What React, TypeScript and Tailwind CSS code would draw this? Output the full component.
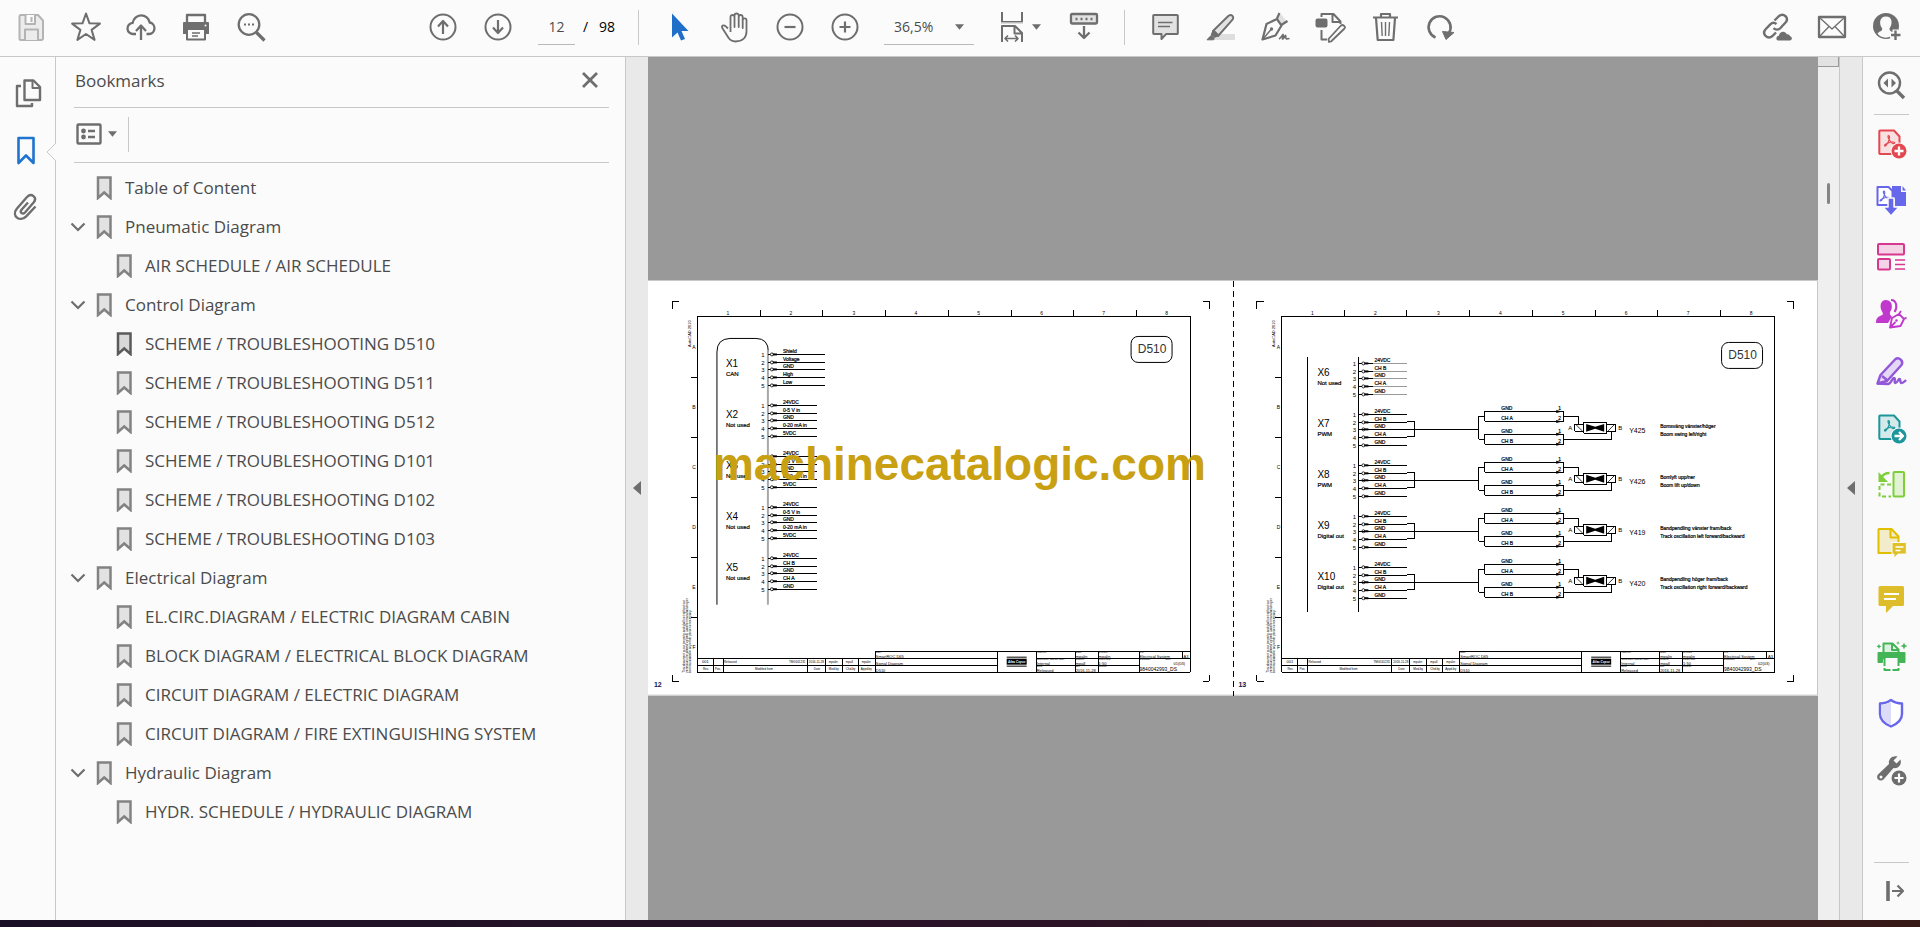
import type { ReactNode } from "react"
import clsx from "clsx"

const bookmarks = [
  { label: "Table of Content", level: 0, open: false },
  { label: "Pneumatic Diagram", level: 0, open: true },
  { label: "AIR SCHEDULE / AIR SCHEDULE", level: 1, open: false },
  { label: "Control Diagram", level: 0, open: true },
  { label: "SCHEME / TROUBLESHOOTING D510", level: 1, open: false, active: true },
  { label: "SCHEME / TROUBLESHOOTING D511", level: 1, open: false },
  { label: "SCHEME / TROUBLESHOOTING D512", level: 1, open: false },
  { label: "SCHEME / TROUBLESHOOTING D101", level: 1, open: false },
  { label: "SCHEME / TROUBLESHOOTING D102", level: 1, open: false },
  { label: "SCHEME / TROUBLESHOOTING D103", level: 1, open: false },
  { label: "Electrical Diagram", level: 0, open: true },
  { label: "EL.CIRC.DIAGRAM / ELECTRIC DIAGRAM CABIN", level: 1, open: false },
  { label: "BLOCK DIAGRAM / ELECTRICAL BLOCK DIAGRAM", level: 1, open: false },
  { label: "CIRCUIT DIAGRAM / ELECTRIC DIAGRAM", level: 1, open: false },
  { label: "CIRCUIT DIAGRAM / FIRE EXTINGUISHING SYSTEM", level: 1, open: false },
  { label: "Hydraulic Diagram", level: 0, open: true },
  { label: "HYDR. SCHEDULE / HYDRAULIC DIAGRAM", level: 1, open: false },
]

function Icon({ children, className = "text-[#6e6e6e]" }: { children: ReactNode; className?: string }) {
  return (
    <svg
      viewBox="0 0 32 32"
      className={clsx("h-8 w-8 shrink-0", className)}
      fill="none"
      stroke="currentColor"
      strokeWidth="2"
      strokeLinejoin="round"
      aria-hidden="true"
    >
      {children}
    </svg>
  )
}

function ToolButton({ label, children }: { label: string; children: ReactNode }) {
  return (
    <button type="button" aria-label={label} className="flex h-[54px] w-[55px] shrink-0 items-center justify-center">
      {children}
    </button>
  )
}

function SideButton({ label, children }: { label: string; children: ReactNode }) {
  return (
    <button type="button" aria-label={label} className="flex h-[57px] w-full shrink-0 items-center justify-center pr-px pb-[2px]">
      {children}
    </button>
  )
}

function Caret() {
  return (
    <svg viewBox="0 0 10 6" className="h-[6px] w-[9px] shrink-0 fill-[#6e6e6e]" aria-hidden="true">
      <path d="M0 0h10L5 6z" />
    </svg>
  )
}

function Separator() {
  return <span className="h-[35px] w-px shrink-0 bg-[#c8c8c8]" />
}

function Toolbar() {
  return (
    <header className="flex h-[57px] shrink-0 items-center border-b border-[#c8c8c8] bg-[#fbfbfb] pr-[6px] pb-[2px] pl-[3px]">
      <ToolButton label="Save">
        <Icon className="text-[#b4b4b4]">
          <path d="M4.500 5.500a1.500 1.500 0 0 1 1.500-1.500h17l5 5.500v18a1.500 1.500 0 0 1-1.500 1.500h-20.500a1.500 1.500 0 0 1-1.500-1.500z" fill="#ececec" />
          <path d="M10.500 4v9h9.500v-9M16.500 6v5" fill="#fbfbfb" />
          <path d="M10 29v-10.500h13v10.500" fill="#ececec" />
        </Icon>
      </ToolButton>
      <ToolButton label="Star">
        <Icon>
          <path d="m16 2.500 3.500 9.800 10.400.3-8.300 6.300 3 10-8.600-5.900-8.600 5.900 3-10-8.300-6.300 10.400-.3z" />
        </Icon>
      </ToolButton>
      <ToolButton label="Upload">
        <Icon>
          <path d="M11 23H8.500a5.600 5.600 0 0 1-.8-11.200 8.600 8.600 0 0 1 17-.3A5.800 5.800 0 0 1 24 23h-2.500" strokeWidth="2.300" />
          <path d="M16 29V15m-5 5 5-5.500 5 5.500" strokeWidth="2.300" />
        </Icon>
      </ToolButton>
      <ToolButton label="Print">
        <Icon>
          <path d="M7 11V4h18v7" strokeWidth="2.300" />
          <path d="M4 11h24a1 1 0 0 1 1 1v11H3V12a1 1 0 0 1 1-1z" fill="currentColor" stroke="none" />
          <path d="M7 18h18v10.500H7z" fill="#fbfbfb" />
          <path d="M12 22h8M12 25h6" strokeWidth="1.500" />
          <circle cx="25.500" cy="14.500" r="1" fill="#fbfbfb" stroke="none" />
        </Icon>
      </ToolButton>
      <ToolButton label="Find">
        <Icon>
          <circle cx="14" cy="13.500" r="10.300" strokeWidth="2.300" />
          <path d="m21.500 21.500 8 8" strokeWidth="3.200" />
          <path d="M9 13.500h2m2 0h2m2 0h2" />
        </Icon>
      </ToolButton>

      <div className="ml-[137px] flex items-center">
        <ToolButton label="Previous page">
          <Icon>
            <circle cx="16" cy="16" r="12.500" />
            <path d="M16 23V10m-5 5.500 5-5.500 5 5.500" strokeWidth="2.200" />
          </Icon>
        </ToolButton>
        <ToolButton label="Next page">
          <Icon>
            <circle cx="16" cy="16" r="12.500" />
            <path d="M16 9v13m-5-5.500 5 5.500 5-5.500" strokeWidth="2.200" />
          </Icon>
        </ToolButton>
        <input
          aria-label="Page number"
          defaultValue="12"
          className="ml-[13px] h-[35px] w-[37px] border-b border-[#b9b9b9] bg-transparent text-center text-sm text-[#4b4b4b] outline-none"
        />
        <span className="ml-2 w-[55px] text-sm text-black">/&nbsp;&nbsp; 98</span>
      </div>
      <Separator />

      <div className="ml-[13px] flex items-center">
        <ToolButton label="Select">
          <Icon className="text-[#1f6fc9]">
            <path d="M8 2.500v24l5.500-5 3.500 8 4-1.500-3.500-8h7z" fill="currentColor" stroke="none" />
          </Icon>
        </ToolButton>
        <ToolButton label="Hand">
          <Icon>
            <path
              d="M9 17.500 6.500 15.200c-2-1.700-4.600-.5-3.200 1.800l6.200 9.800c1.500 2.300 3.500 3.700 7 3.700 6.500 0 11-3.500 11-10V9.300c0-2.600-3.800-2.600-3.800 0V17 6c0-2.700-4-2.700-4 0v10V4.500c0-2.700-4.200-2.700-4.200 0V16 6c0-2.700-4-2.700-4 0v15"
              strokeWidth="1.800"
            />
          </Icon>
        </ToolButton>
        <ToolButton label="Zoom out">
          <Icon>
            <circle cx="16" cy="16" r="12.500" />
            <path d="M10.500 16h11" strokeWidth="2.200" />
          </Icon>
        </ToolButton>
        <ToolButton label="Zoom in">
          <Icon>
            <circle cx="16" cy="16" r="12.500" />
            <path d="M10.500 16h11M16 10.500v11" strokeWidth="2.200" />
          </Icon>
        </ToolButton>
      </div>
      <div className="relative ml-3 flex items-center">
        <select
          aria-label="Zoom level"
          className="h-[35px] w-[90px] appearance-none border-b border-[#b9b9b9] bg-transparent pl-[10px] text-sm text-[#4b4b4b] outline-none"
        >
          <option>36,5%</option>
        </select>
        <span className="pointer-events-none absolute right-[10px]">
          <Caret />
        </span>
      </div>
      <button type="button" aria-label="Fit width" className="ml-[22px] flex h-[54px] w-[60px] shrink-0 items-center gap-1">
        <Icon>
          <path d="M6 1v10h20V1M6 31V15h13l7 7v9M18.500 15v7.500H26" />
          <path d="M5 12h22" stroke="#d5d5d5" strokeWidth="1.500" />
          <path d="M9.500 27.500h12m-9.500-3-3 3 3 3m7-6 3 3-3 3" strokeWidth="1.600" />
        </Icon>
        <Caret />
      </button>
      <ToolButton label="Page display">
        <Icon>
          <rect x="3" y="3" width="26" height="9.500" rx="1" strokeWidth="2.300" fill="#e2e2e2" />
          <path d="M7.500 8h2m3 0h2m3 0h2m3 0h2M16 15v12m-5.500-5.500L16 27l5.500-5.500" strokeWidth="2.300" />
        </Icon>
      </ToolButton>
      <span className="ml-[13px] h-[35px] w-px shrink-0 bg-[#c8c8c8]" />

      <div className="ml-3 flex items-center">
        <ToolButton label="Comment">
          <Icon>
            <path d="M5 4h23a.8.8 0 0 1 .8.800v17.500a.8.8 0 0 1-.8.800H17L12.500 28v-5H5a.8.8 0 0 1-.8-.8V4.800A.8.800 0 0 1 5 4z" fill="#e2e2e2" />
            <path d="M9 11.500h14.500M9 15.500h12" strokeWidth="1.500" />
          </Icon>
        </ToolButton>
        <ToolButton label="Highlight">
          <Icon>
            <path d="M10 29l7-6h14v6z" fill="#dedede" stroke="none" />
            <path d="M9.500 19.500 24 5.200c1.500-1.400 3-1.600 4.300-.4s1.200 2.800-.2 4.300L14.500 24.500z" fill="#e2e2e2" strokeWidth="1.900" />
            <path d="m9 19-1.800 5 3 2.500L15 25zM7 24.500 3 28.800h6.500l1-1z" fill="currentColor" strokeWidth="1" />
          </Icon>
        </ToolButton>
        <ToolButton label="Sign">
          <Icon>
            <path d="M19 7l5 7 4-3-6-8z" fill="#e0e0e0" stroke="none" />
            <path d="M18 7.500 20.500 2M23 13.500 28.500 10M18 8 7.500 13 3.500 28.500 16.500 24.500 22.500 14.500z" strokeWidth="2.200" />
            <path d="m4 28 8-9.500" strokeWidth="1.400" />
            <circle cx="12.500" cy="18" r="1.700" fill="currentColor" stroke="none" />
            <path d="M20 28c2-1 3-3.500 4-4.500.8 1.500-.8 3-.5 4.500 1.500-.5 2-3 3-3.500.5 1.500 0 3 1 3.500l3-.5" strokeWidth="1.700" />
          </Icon>
        </ToolButton>
        <ToolButton label="Edit PDF">
          <Icon>
            <rect x="2.500" y="8.500" width="10" height="7" rx="1" fill="currentColor" />
            <path d="M7.500 6V3h12l7 7.500V13M18.500 3.500V11H26M7.500 19v9.500H13" />
            <path d="M17 30.500l-2 .500-.5-3L27 14.500c1.800-1.500 5 1 3.500 3z" strokeWidth="1.800" />
          </Icon>
        </ToolButton>
        <ToolButton label="Delete">
          <Icon>
            <path d="M4 6.500h25M12 6V3h9v3M7 7l1.700 22h15.700L26 7" strokeWidth="2.200" />
            <path d="M12.500 11l.7 14M16.500 11v14M20.500 11l-.7 14" strokeWidth="1.400" />
          </Icon>
        </ToolButton>
        <ToolButton label="Rotate">
          <Icon>
            <path d="M11.500 26.500A11 11 0 1 1 25 22" strokeWidth="2.600" />
            <path d="M18.500 20.500 30 21.500 22 28.500z" fill="currentColor" strokeWidth="1" />
          </Icon>
        </ToolButton>
      </div>

      <div className="ml-auto flex items-center">
        <ToolButton label="Share link">
          <Icon>
            <path d="M13.500 9.500 18 5c4.500-3.500 10 1.500 7 6l-5.500 6c-2 2-5 2-7 .2" strokeWidth="2.400" />
            <path d="M15.500 13c-1.800-1.500-4.300-1.500-6.200.3L4.800 18c-4.500 5 1.700 11 6.700 7l3.500-3.500" strokeWidth="2.400" />
            <path d="M17 29.500c-2.500-.5-2-4.500.8-4.700 1-5 6.700-5 8-1.500 1.700-.3 3 .7 3.200 2 2.500.5 2.500 4-.2 4.200z" fill="currentColor" stroke="none" />
          </Icon>
        </ToolButton>
        <ToolButton label="Email">
          <Icon>
            <rect x="3" y="6" width="26" height="20" strokeWidth="2.300" />
            <path d="m4 7 12 11L28 7M4 25l9-9.500M28 25l-9-9.500" strokeWidth="1.300" />
          </Icon>
        </ToolButton>
        <ToolButton label="Profile">
          <Icon>
            <circle cx="15" cy="15" r="13" fill="currentColor" stroke="none" />
            <path d="M15 5.500c7 0 6.500 8 3.500 12-.5 2.500 3 3 4.500 5-3 5.500-13.500 5.500-16.500 0 2-2.500 5-2 4.700-5-3.200-4-3.200-12 3.800-12z" fill="#fbfbfb" stroke="none" />
            <path d="M24.500 18.500v11M19 24h11" stroke="#fbfbfb" strokeWidth="6" />
            <path d="M24.500 19.500v9.500M20 24h9.500" strokeWidth="2.400" />
          </Icon>
        </ToolButton>
      </div>
    </header>
  )
}

function BookmarkGlyph({ active }: { active?: boolean }) {
  return (
    <svg viewBox="0 0 16 24" className="h-6 w-4 shrink-0" aria-hidden="true">
      <path
        d="M2 1.500h12.500v20.500L8.200 16.500 2 22z"
        fill={active ? "#d8d8d8" : "#e2e2e2"}
        stroke={active ? "#5a5a5a" : "#828282"}
        strokeWidth="2.500"
      />
    </svg>
  )
}

function NavRail() {
  return (
    <nav className="relative flex w-14 shrink-0 flex-col border-r border-[#c8c8c8] bg-[#fbfbfb] pt-2">
      <button type="button" aria-label="Page thumbnails" className="flex h-14 items-center pl-3">
        <Icon>
          <path d="M12.500 3.500h9L28 10v13H12.500z" strokeWidth="2.400" />
          <path d="M20.500 4v7H28" />
          <path d="M9 9H5v20h15v-3" strokeWidth="2.400" />
        </Icon>
      </button>
      <button type="button" aria-label="Bookmarks" className="flex h-[60px] items-center pl-[10px]">
        <Icon className="text-[#1f74cf]">
          <path d="M8.500 3h15v25L16 20.500 8.500 28z" strokeWidth="2.600" />
        </Icon>
      </button>
      <button type="button" aria-label="Attachments" className="flex h-[52px] items-center pl-[10px]">
        <Icon>
          <path
            d="m25.500 15.500-9.300 9.800c-6.500 6.500-15-.5-9.400-7.500L17 6c4.500-4.500 10.500.5 6.800 5.300L15 21.500c-2.500 2.500-5.500 0-3.500-2.700l6.500-7.300"
            strokeWidth="2.400"
          />
        </Icon>
      </button>
      {/* notch pointing at the active tab */}
      <svg viewBox="0 0 10 18" className="absolute top-[86px] -right-px h-[18px] w-[10px]" aria-hidden="true">
        <path d="M10 0 1 9l9 9" fill="#fbfbfb" stroke="#c8c8c8" />
      </svg>
    </nav>
  )
}

function BookmarksPanel() {
  return (
    <aside className="flex w-[570px] shrink-0 flex-col border-r border-[#c8c8c8] bg-[#fbfbfb] pr-4 pl-[18px]">
      <div className="flex h-[51px] items-center justify-between border-b border-[#c8c8c8] pb-[2px]">
        <h2 className="ml-px text-[17px] text-[#4b4b4b]">Bookmarks</h2>
        <button type="button" aria-label="Close" className="mr-[10px]">
          <svg viewBox="0 0 18 18" className="h-[18px] w-[18px]" stroke="#6e6e6e" strokeWidth="2.800" aria-hidden="true">
            <path d="m2 1 14 14M16 1 2 15" />
          </svg>
        </button>
      </div>
      <div className="flex h-[55px] items-center border-b border-[#c8c8c8] pb-[2px]">
        <button type="button" aria-label="Options" className="ml-[2px] flex items-center gap-[6px]">
          <svg viewBox="0 0 26 22" className="h-[22px] w-[26px]" fill="none" stroke="#6e6e6e" strokeWidth="2.400" aria-hidden="true">
            <rect x="1.500" y="1.500" width="23" height="19" rx="1" />
            <path d="M12 8h7M12 14h7" />
            <circle cx="7.500" cy="8" r="1.200" />
            <circle cx="7.500" cy="14" r="1.200" />
          </svg>
          <Caret />
        </button>
        <span className="ml-[11px] h-[35px] w-px bg-[#c8c8c8]" />
      </div>
      <ul className="mt-[5px] text-[17px] text-[#4b4b4b]">
        {bookmarks.map((item) => (
          <li key={item.label} className={clsx("flex h-[39px] items-center", item.level === 1 && "pl-5")}>
            <span className="flex w-[22px] shrink-0 items-center">
              {item.open && (
                <button type="button" aria-label={`Collapse ${item.label}`} className="-ml-1">
                  <svg viewBox="0 0 16 10" className="h-[10px] w-4" fill="none" stroke="#6e6e6e" strokeWidth="2.200" aria-hidden="true">
                    <path d="m1.500 1.500 6.500 6.500 6.500-6.500" />
                  </svg>
                </button>
              )}
            </span>
            <BookmarkGlyph active={item.active} />
            <a href="#" className="ml-[13px] whitespace-nowrap">
              {item.label}
            </a>
          </li>
        ))}
      </ul>
    </aside>
  )
}

const columns = [80, 143, 206, 268, 331, 394, 456, 519]
const rows = ["A", "B", "C", "D", "E", "F"]

const inputs = ["24VDC", "0-5 V in", "GND", "0-20 mA in", "5VDC"]
const outputs = ["24VDC", "CH B", "GND", "CH A", "GND"]

const leftBlocks = [
  { name: "X1", note: "CAN", y: 74, pins: ["Shield", "Voltage", "GND", "High", "Low"], end: 177 },
  { name: "X2", note: "Not used", y: 125, pins: inputs, end: 169 },
  { name: "X3", note: "Not used", y: 176, pins: inputs, end: 169 },
  { name: "X4", note: "Not used", y: 227, pins: inputs, end: 169 },
  { name: "X5", note: "Not used", y: 278, pins: outputs, end: 169 },
]

const rightBlocks = [
  { name: "X6", note: "Not used", y: 83 },
  { name: "X7", note: "PWM", y: 134, valve: "Y425", sv: "Bomsväng vänster/höger", en: "Boom swing left/right" },
  { name: "X8", note: "PWM", y: 185, valve: "Y426", sv: "Bomlyft upp/ner", en: "Boom lift up/down" },
  { name: "X9", note: "Digital out", y: 236, valve: "Y419", sv: "Bandpendling vänster fram/back", en: "Track oscillation left forward/backward" },
  { name: "X10", note: "Digital out", y: 287, valve: "Y420", sv: "Bandpendling höger fram/back", en: "Track oscillation right forward/backward" },
]

// Drawing frame, rulers and title block shared by every sheet
function SheetFrame({ page, sheet }: { page: string; sheet: string }) {
  return (
    <g>
      <g fill="none" stroke="#000" shapeRendering="crispEdges">
        <path d="M24.500 29v-7.500h7M555 21.500h6.500V29M24.500 395v6.500h7M555 401.500h6.500V395" />
        <path d="M49.500 36.500h493v356h-493z" />
        <path d="M112.500 30v6M174.500 30v6M237.500 30v6M300.500 30v6M363.500 30v6M425.500 30v6M488.500 30v6" />
        <path d="M43 97.500h6M43 157.500h6M43 217.500h6M43 277.500h6M43 337.500h6" />
        <path d="M49 378.500h300M49 385.500h300M227.500 392v-20.500h315M65.500 378v14M75.500 378v14M159.500 378v14M177.500 378v14M194.500 378v14M210.500 378v14" />
        <path d="M349.500 371v21M388.500 371v21M427.500 371v21M450.500 371v21M491.500 371v21M534.500 371v7M388 378.500h155M388 385.500h103" />
      </g>
      <g fontSize="5">
        {columns.map((x, i) => (
          <text key={x} x={x} y="35" textAnchor="middle">
            {i + 1}
          </text>
        ))}
        {rows.map((r, i) => (
          <text key={r} x="46" y={69 + i * 60} textAnchor="middle">
            {r}
          </text>
        ))}
      </g>
      <text transform="translate(43 67) rotate(-90)" fontSize="4">
        AutoCAD 2010
      </text>
      <g fontSize="3">
        <text transform="translate(37 393) rotate(-90)">This document is our property and shall not without our</text>
        <text transform="translate(40 393) rotate(-90)">permission be altered, copied, used for manufacturing or</text>
        <text transform="translate(43 393) rotate(-90)">communicated to any other person or company.</text>
      </g>
      <g fontSize="3">
        <text x="54" y="383" fontSize="4">
          001
        </text>
        <text x="76" y="383">Released</text>
        <text x="141" y="383">TMG161231</text>
        <text x="161" y="383">2016-11-28</text>
        <text x="181" y="383">mpalin</text>
        <text x="198" y="383">mpall</text>
        <text x="214" y="383">mpalin</text>
        <text x="55" y="390">Rev.</text>
        <text x="67" y="390">Pos.</text>
        <text x="107" y="390">Modified from</text>
        <text x="166" y="390">Date</text>
        <text x="181" y="390">Mod.by</text>
        <text x="198" y="390">Chd.by</text>
        <text x="213" y="390">Appd.by</text>
      </g>
      <g fontSize="2">
        <text x="228" y="373">Name</text>
        <text x="389" y="373">Handled by</text>
        <text x="389" y="380">Confidentiality class acc/ 15504</text>
        <text x="389" y="387">Status</text>
        <text x="428" y="373">Drawn</text>
        <text x="428" y="380">Design by</text>
        <text x="428" y="387">Date</text>
        <text x="451" y="373">Reviewed</text>
        <text x="451" y="380">Product name</text>
        <text x="451" y="387">Company</text>
        <text x="492" y="373">Type</text>
        <text x="492" y="380">Designation</text>
        <text x="518" y="380">Sheet</text>
      </g>
      <g fontSize="4">
        <text x="228" y="378">SmartROC D65</text>
        <text x="228" y="385">Signal Diagram</text>
        <text x="228" y="392">D510</text>
        <text x="389" y="385">Internal</text>
        <text x="389" y="392">Released</text>
        <text x="428" y="378">mpalin</text>
        <text x="428" y="385">mpall</text>
        <text x="428" y="392">2016-11-28</text>
        <text x="451" y="378">mpalin</text>
        <text x="451" y="385">1:50</text>
        <text x="492" y="378">Electrical System</text>
        <text x="536" y="378">A3</text>
        <text x="526" y="385">{sheet}</text>
        <text x="492" y="391" fontSize="5">
          9840042993_DS
        </text>
      </g>
      <path d="M359 377.500h20M359 386.500h20" stroke="#000" />
      <rect x="359" y="379" width="20" height="6" />
      <text x="369" y="383" fontSize="3" fill="#fff" fontWeight="700" fontStyle="italic" textAnchor="middle">
        Atlas Copco
      </text>
      <text x="6" y="407" fontSize="7" fontWeight="700" fill="#0b1550">
        {page}
      </text>
    </g>
  )
}

function SheetTag({ x, y }: { x: number; y: number }) {
  return (
    <g>
      <rect x={x} y={y} width="41" height="26" rx="7" fill="none" stroke="#000" />
      <text x={x + 21} y={y + 17} fontSize="12" textAnchor="middle" fill="#333">
        D510
      </text>
    </g>
  )
}

type BlockProps = { x: number; y: number; name: string; note: string; pins: string[]; end: number; faint?: boolean }

// Connector block; x is the right-hand edge of the connector housing
function Block({ x, y, name, note, pins, end, faint }: BlockProps) {
  return (
    <g>
      <text x={x - 42} y={y + 13} fontSize="10">
        {name}
      </text>
      <text x={x - 42} y={y + 22} fontSize="6" stroke="#000" strokeWidth="0.200">
        {note}
      </text>
      {pins.map((pin, i) => {
        const py = y + Math.round(i * 7.7)
        return (
          <g key={i}>
            <text x={x - 5} y={py + 3} fontSize="6" textAnchor="middle">
              {i + 1}
            </text>
            <path d={`M${x} ${py + 0.5}h14`} stroke="#000" shapeRendering="crispEdges" />
            <path d={`M${x + 14} ${py + 0.5}H${end}`} stroke={faint ? "#999" : "#000"} shapeRendering="crispEdges" />
            <circle cx={x + 4} cy={py + 0.5} r="1.500" fill="#fff" stroke="#000" strokeWidth="0.800" />
            <path d={`M${x + 5} ${py + 0.5}h4`} stroke="#000" strokeWidth="2" />
            <text x={x + 15} y={py - 1} fontSize="5" stroke="#000" strokeWidth="0.200">
              {pin}
            </text>
          </g>
        )
      })}
    </g>
  )
}

// Cable pair and solenoid valve wired to a connector block
function Valve({ y, name, sv, en }: { y: number; name: string; sv: string; en: string }) {
  return (
    <g transform={`translate(0 ${y})`}>
      <g fill="none" stroke="#000" shapeRendering="crispEdges">
        <path d="M175 7.500h7.500v15.500H175M127 15.500h119M252 2.500h-5.500v23h5.500" />
        <path d="M252.500-2.500h79v10h-79zM252.500 20.500h79v10h-79z" />
        <path d="M332 2.500h14.500v8M332 25.500h47.500v-8" />
        <path d="M342.500 10.500h9v7h-9zM374.500 10.500h9v7h-9zM351.500 8.500h23v11h-23z" />
      </g>
      <path d="M344 11l6 6M376 17l6-6" stroke="#000" strokeWidth="0.800" />
      <path d="M354 10l9 3 9-3v8l-9-3-9 3z" />
      <path d="M324-4l6 1.500-6 1.500zM324 6l6 1.500-6 1.500zM324 19l6 1.500-6 1.500zM324 29l6 1.500-6 1.500z" />
      <g fontSize="5" stroke="#000" strokeWidth="0.200">
        <text x="269" y="-4">GND</text>
        <text x="269" y="6">CH A</text>
        <text x="269" y="19">GND</text>
        <text x="269" y="29">CH B</text>
        <text x="326" y="-4">1</text>
        <text x="326" y="6">2</text>
        <text x="326" y="19">1</text>
        <text x="326" y="29">2</text>
        <text x="428" y="14">{sv}</text>
        <text x="428" y="22">{en}</text>
      </g>
      <g fontSize="6">
        <text x="336" y="16">A</text>
        <text x="386" y="16">B</text>
        <text x="397" y="19" fontSize="7">
          {name}
        </text>
      </g>
    </g>
  )
}

function DocumentSpread() {
  return (
    <svg
      viewBox="0 0 1171 416"
      className="w-full font-['Liberation_Sans',Arial,sans-serif]"
      role="img"
      aria-label="Signal diagram D510, pages 12 and 13"
    >
      <rect width="1171" height="416" fill="#fff" />
      <path d="M0 .500h1170.500v415H0" fill="none" stroke="#c8c8c8" />

      <SheetFrame page="12" sheet="01(03)" />
      <SheetTag x={483.5} y={56.5} />
      <path d="M69 325V72q0-13 13-13.500h26q12.500 0 12.500 13.500" fill="none" stroke="#000" />
      <path d="M120 70v255" stroke="#a8a8a8" strokeWidth="2" />
      {leftBlocks.map((b) => (
        <Block key={b.name} x={120} {...b} />
      ))}

      <g transform="translate(585 0)">
        <SheetFrame page="13" sheet="02(03)" />
        <SheetTag x={489.5} y={62.5} />
        <path d="M75.500 77v255M126.500 77v255" stroke="#000" shapeRendering="crispEdges" />
        {rightBlocks.map((b) => (
          <g key={b.name}>
            <Block x={127} y={b.y} name={b.name} note={b.note} pins={outputs} end={175} faint={!b.valve} />
            {b.valve && <Valve y={b.y} name={b.valve} sv={b.sv} en={b.en} />}
          </g>
        ))}
      </g>

      <path d="M585.500 1v415" stroke="#000" strokeDasharray="6 4" shapeRendering="crispEdges" />
      <text x="65" y="200" fontSize="46" fontWeight="700" fill="#c8a012">
        machinecatalogic.com
      </text>
    </svg>
  )
}

function CollapseHandle({ label }: { label: string }) {
  return (
    <button type="button" aria-label={label} className="flex w-[22px] shrink-0 items-center justify-center bg-[#e9e9e9] pb-px">
      <svg viewBox="0 0 8 14" className="h-[14px] w-2 fill-[#6e6e6e]" aria-hidden="true">
        <path d="M8 0v14L0 7z" />
      </svg>
    </button>
  )
}

// Trefoil used on the PDF tool icons
function PdfMark() {
  return <path d="M13.500 8.500c-1.500.5.500 4 2 6 1.500 2 4 3 4.500 1.500-1-1.500-5.500-.5-8 .5-2.500 1-3 2.500-2 2.500 1.500 0 4.500-6 4.500-8.500 0-1.200-.5-2-1-2z" strokeWidth="1.200" />
}

function ToolsRail() {
  return (
    <nav className="flex w-[58px] shrink-0 flex-col items-center border-l border-[#c8c8c8] bg-[#fafafa]">
      <SideButton label="Search tools">
        <Icon>
          <circle cx="14.500" cy="14" r="10.500" strokeWidth="2.400" />
          <path d="m22 22 7 7" strokeWidth="3.400" />
          <path d="M13 9.500v9L8.500 14zM16.500 9.500v9L21 14z" fill="currentColor" stroke="none" />
        </Icon>
      </SideButton>
      <span className="h-px w-[35px] shrink-0 bg-[#c8c8c8]" />
      <SideButton label="Create PDF">
        <Icon className="text-[#e34850]">
          <path d="M5 3.500h14l5.500 6V27H5a.7.700 0 0 1-.7-.7V4.200A.7.700 0 0 1 5 3.500z" fill="#f8dfe0" />
          <PdfMark />
          <circle cx="24" cy="24" r="8.500" fill="#fafafa" stroke="none" />
          <circle cx="24" cy="24" r="7.500" fill="currentColor" stroke="none" />
          <path d="M24 19.500v9M19.500 24h9" stroke="#fff" strokeWidth="2.300" />
        </Icon>
      </SideButton>
      <SideButton label="Combine files">
        <Icon className="text-[#6767ec]">
          <path d="M2.500 3h11l4 4v14h-15z" fill="#fff" />
          <g transform="translate(-4 -1) scale(0.950)">
            <PdfMark />
          </g>
          <path d="M17 2h9v6h5v14H20v-7h-3z" fill="currentColor" stroke="none" />
          <path d="M27.500 2 31 6.500h-3.500z" fill="currentColor" stroke="none" />
          <path d="M13 14h6v9h5l-8 9-8-9h5z" fill="currentColor" stroke="#fafafa" strokeWidth="1.500" />
        </Icon>
      </SideButton>
      <SideButton label="Organize pages">
        <Icon className="text-[#d83790]">
          <rect x="3" y="3" width="26" height="10.500" rx="1" fill="#f5d3e6" />
          <rect x="3" y="18" width="12" height="10.500" rx="1" fill="#f5d3e6" />
          <path d="M20 19h10M20 23.500h10M20 28h10" strokeWidth="1.400" />
        </Icon>
      </SideButton>
      <SideButton label="Request signatures">
        <Icon className="text-[#c038cc]">
          <path d="M11 2c7 0 7 9 4 12-.5 3 1 3.500 2 4.500L13 25H1c0-5 2-6.500 6.500-8 .5-1 .5-2-.5-3.500C4.500 9 5 2 11 2z" fill="currentColor" stroke="none" />
          <path d="M16 2c6 0 6.500 8 3.500 12" />
          <path d="M15 29.500 17 20l7-4 5 5-3.500 7zM24 16l2-3M29 21l2.500-1.500M15 29.500l5.500-5.500" strokeWidth="1.800" fill="#fafafa" />
          <circle cx="21.500" cy="22.500" r="1.300" fill="currentColor" stroke="none" />
        </Icon>
      </SideButton>
      <SideButton label="Fill and sign">
        <Icon className="text-[#9256d9]">
          <path d="M2.500 28.500 5.500 20 20.500 4c3.500-2.500 8.500 2 6 6L12 26z" fill="#e5d8f6" strokeWidth="2.400" />
          <path d="M7 21l5 4M2 28.500l11 .5c3 0 4-6 6-6s-.5 5 1.500 5 2.500-4 4-4 0 4 2 4 2.500-1 4.500-3" strokeWidth="2.400" />
        </Icon>
      </SideButton>
      <SideButton label="Export PDF">
        <Icon className="text-[#1d959b]">
          <path d="M5 3.500h14l5.500 6V27H5a.7.700 0 0 1-.7-.7V4.200A.7.700 0 0 1 5 3.500z" fill="#d3e9ea" />
          <PdfMark />
          <circle cx="24" cy="24" r="8.500" fill="#fafafa" stroke="none" />
          <circle cx="24" cy="24" r="7.500" fill="currentColor" stroke="none" />
          <path d="M19.500 24h8m-3.500-4 4 4-4 4" stroke="#fff" strokeWidth="2.300" />
        </Icon>
      </SideButton>
      <SideButton label="Rotate pages">
        <Icon className="text-[#7fcf3c]">
          <rect x="18.500" y="3" width="10.500" height="24.500" rx="1" fill="#e2f3d4" />
          <path d="M16 15.500H4.500v12H16" strokeDasharray="4 2.500" />
          <path d="M14.500 4C10 4 7.500 6 6 9" strokeWidth="2.500" />
          <path d="M3.500 3v10H13z" fill="currentColor" stroke="none" />
        </Icon>
      </SideButton>
      <SideButton label="Send for comments">
        <Icon className="text-[#dfbf00]">
          <path d="M4 3h12.500l7 7.500V27H3.500V3.500z" fill="#f3ecca" />
          <path d="M15.500 3.500v8h8" />
          <path d="M17 16.500h13.500a.8.800 0 0 1 .8.800v10a.8.800 0 0 1-.8.800H23l-4 4v-4h-2z" fill="#e0c028" stroke="#fafafa" strokeWidth="1" />
          <path d="M20.500 21h8M20.500 24.500h5" stroke="#fff" strokeWidth="1.500" />
        </Icon>
      </SideButton>
      <SideButton label="Comment">
        <Icon className="text-[#debd2b]">
          <path d="M5 3h22.500A1.500 1.500 0 0 1 29 4.500v17a1.500 1.500 0 0 1-1.500 1.500H18l-7 7v-7H5a1.500 1.500 0 0 1-1.500-1.500v-17A1.500 1.500 0 0 1 5 3z" fill="currentColor" stroke="none" />
          <path d="M9 11h15M9 16h12" stroke="#fff" />
        </Icon>
      </SideButton>
      <SideButton label="Scan and print">
        <Icon className="text-[#44b556]">
          <path d="M8.500 13V3.500h9l6 6V13M17 3.500V10h6.500" fill="#dcf0df" />
          <path d="M3.500 13v9H7v-4h18v4h4.500v-9z" fill="currentColor" />
          <path d="M9.500 18v12h14V18" strokeDasharray="8 2" fill="#fafafa" />
          <path d="M29 2.500l1 2.500 2.500 1-2.500 1-1 2.500L28 7l-2.500-1L28 5zM4 4l.7 1.500L6.500 6.500l-1.800.7L4 9l-.8-1.800L1.500 6.500l1.700-1zM23 1l.5 1.500L25 3l-1.500.500L23 5l-.5-1.500L21 3l1.500-.5z" fill="currentColor" stroke="none" />
        </Icon>
      </SideButton>
      <SideButton label="Protect">
        <Icon className="text-[#6767ec]">
          <path d="M16 3c3.500 2.500 7 3.500 11 3.500V17c0 5.500-5 10-11 12.500C10 27 5 22.500 5 17V6.500C9 6.500 12.500 5.500 16 3z" fill="#fff" strokeWidth="2.400" />
          <path d="M16 4.500V28c-5-2-9.500-6-9.500-11V7.800C10 7.500 13 6.500 16 4.500z" fill="#dcdcf8" stroke="none" />
        </Icon>
      </SideButton>
      <SideButton label="More tools">
        <Icon>
          <path d="M25.500 5.500l-4 4-3-3 4-4c-5-1.500-9.500 2.500-8.500 7.500L3 20.500c-3 4 2 8 5.500 5L18.500 14c5 1 8.500-3.500 7-8.500z" fill="currentColor" stroke="none" />
          <circle cx="6" cy="23" r="1.500" fill="#fafafa" stroke="none" />
          <circle cx="24" cy="24" r="8.500" fill="#fafafa" stroke="none" />
          <circle cx="24" cy="24" r="7.500" fill="currentColor" stroke="none" />
          <path d="M24 19.500v9M19.500 24h9" stroke="#fff" strokeWidth="2.200" />
        </Icon>
      </SideButton>
      <span className="mt-auto h-px w-[35px] shrink-0 bg-[#c8c8c8]" />
      <SideButton label="Collapse tools">
        <Icon>
          <path d="M13 6v20" strokeWidth="3.600" />
          <path d="M17 16h11m-5.500-5.500L28 16l-5.500 5.500" strokeWidth="2.200" />
        </Icon>
      </SideButton>
    </nav>
  )
}

export default function App() {
  return (
    <div className="flex h-screen flex-col overflow-hidden bg-[#fbfbfb] font-['Open_Sans','Noto_Sans',sans-serif]">
      <Toolbar />
      <div className="flex min-h-0 flex-1">
        <NavRail />
        <BookmarksPanel />
        <CollapseHandle label="Hide bookmarks" />
        <main className="flex min-w-0 flex-1 items-center bg-[#999] pb-px">
          <DocumentSpread />
        </main>
        <div className="flex w-[22px] shrink-0 flex-col items-center border-r border-[#c8c8c8] bg-[#efefef]">
          <div className="h-[10px] w-full border-r border-b border-[#999] bg-[#e2e2e2]" />
          <div className="mt-[116px] h-[21px] w-[3px] rounded-sm bg-[#858585]" />
        </div>
        <CollapseHandle label="Hide tools" />
        <ToolsRail />
      </div>
      <div className="h-[7px] shrink-0 bg-linear-to-r from-[#190f26] via-[#2b1328] to-[#371a18]" />
    </div>
  )
}
